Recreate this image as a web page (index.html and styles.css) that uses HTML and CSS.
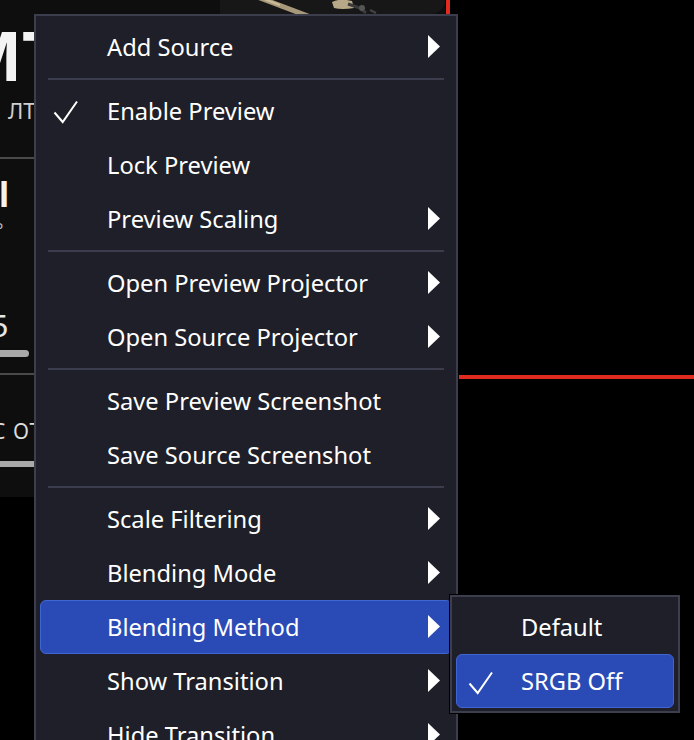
FILE: index.html
```html
<!DOCTYPE html>
<html lang="en">
<head>
<meta charset="utf-8">
<title>Context menu</title>
<link rel="stylesheet" href="styles.css">
</head>
<body>
<div class="screen">
  <div class="preview">
    <div class="panel">
      <div class="topimg">
        <svg width="225" height="14" viewBox="0 0 225 14">
          <path d="M40 -2 L88 16" stroke="#a8987a" stroke-width="5" stroke-linecap="round"/>
          <path d="M44 -1 L60 5" stroke="#cbbd9c" stroke-width="2"/>
          <path d="M112 2 Q120 -2 132 1 L134 8 Q122 10 114 8 Z" fill="#b7a887"/>
          <path d="M128 4 L140 8 L146 13" stroke="#3a3a3a" stroke-width="3" fill="none"/>
          <circle cx="142" cy="8" r="3" fill="#555"/>
          <path d="M150 10 L156 13" stroke="#444" stroke-width="2"/>
        </svg>
      </div>
      <div class="bigtxt">МТ</div>
      <div class="smalltxt">ЛТ</div>
      <div class="hline"></div>
      <div class="itxt">l</div>
      <div class="degtxt">°</div>
      <div class="numtxt">25</div>
      <div class="bar short"></div>
      <div class="hline second"></div>
      <div class="otxt">С ОТ</div>
      <div class="bar full"></div>
    </div>
    <div class="red-v"></div>
    <div class="red-h"></div>
  </div>

  <div class="menu">
    <div class="item"><span class="check"></span><span class="label">Add Source</span><span class="arrow"><svg width="12" height="23" viewBox="0 0 12 23"><path d="M0 0 L12 11.5 L0 23 Z" fill="#fff"/></svg></span></div>
    <div class="sep"></div>
    <div class="item"><span class="check"><svg width="26" height="24" viewBox="0 0 26 24"><path d="M1.5 12.5 L9.7 22 L24 1.5" stroke="#fff" stroke-width="2" fill="none"/></svg></span><span class="label">Enable Preview</span></div>
    <div class="item"><span class="check"></span><span class="label">Lock Preview</span></div>
    <div class="item"><span class="check"></span><span class="label">Preview Scaling</span><span class="arrow"><svg width="12" height="23" viewBox="0 0 12 23"><path d="M0 0 L12 11.5 L0 23 Z" fill="#fff"/></svg></span></div>
    <div class="sep"></div>
    <div class="item"><span class="check"></span><span class="label">Open Preview Projector</span><span class="arrow"><svg width="12" height="23" viewBox="0 0 12 23"><path d="M0 0 L12 11.5 L0 23 Z" fill="#fff"/></svg></span></div>
    <div class="item"><span class="check"></span><span class="label">Open Source Projector</span><span class="arrow"><svg width="12" height="23" viewBox="0 0 12 23"><path d="M0 0 L12 11.5 L0 23 Z" fill="#fff"/></svg></span></div>
    <div class="sep"></div>
    <div class="item"><span class="check"></span><span class="label">Save Preview Screenshot</span></div>
    <div class="item"><span class="check"></span><span class="label">Save Source Screenshot</span></div>
    <div class="sep"></div>
    <div class="item"><span class="check"></span><span class="label">Scale Filtering</span><span class="arrow"><svg width="12" height="23" viewBox="0 0 12 23"><path d="M0 0 L12 11.5 L0 23 Z" fill="#fff"/></svg></span></div>
    <div class="item"><span class="check"></span><span class="label">Blending Mode</span><span class="arrow"><svg width="12" height="23" viewBox="0 0 12 23"><path d="M0 0 L12 11.5 L0 23 Z" fill="#fff"/></svg></span></div>
    <div class="item active"><span class="check"></span><span class="label">Blending Method</span><span class="arrow"><svg width="12" height="23" viewBox="0 0 12 23"><path d="M0 0 L12 11.5 L0 23 Z" fill="#fff"/></svg></span></div>
    <div class="item"><span class="check"></span><span class="label">Show Transition</span><span class="arrow"><svg width="12" height="23" viewBox="0 0 12 23"><path d="M0 0 L12 11.5 L0 23 Z" fill="#fff"/></svg></span></div>
    <div class="item"><span class="check"></span><span class="label">Hide Transition</span><span class="arrow"><svg width="12" height="23" viewBox="0 0 12 23"><path d="M0 0 L12 11.5 L0 23 Z" fill="#fff"/></svg></span></div>
  </div>

  <div class="submenu">
    <div class="item sub"><span class="check"></span><span class="label">Default</span></div>
    <div class="item sub active"><span class="check"><svg width="26" height="24" viewBox="0 0 26 24"><path d="M1.5 12.5 L9.7 22 L24 1.5" stroke="#fff" stroke-width="2" fill="none"/></svg></span><span class="label">SRGB Off</span></div>
  </div>
</div>
</body>
</html>
```

FILE: styles.css
```css
html, body {
  margin: 0;
  padding: 0;
  background: #000;
  overflow: hidden;
}

.screen {
  position: relative;
  width: 694px;
  height: 740px;
  overflow: hidden;
  background: #000;
  font-family: "Noto Sans", "Open Sans", sans-serif;
}

.preview {
  position: relative;
  width: 694px;
  height: 740px;
}

.panel {
  width: 445px;
  height: 497px;
  background: #0e0e0e;
  border-bottom-right-radius: 10px;
  overflow: hidden;
  display: flex;
  flex-direction: column;
  color: #fff;
  font-family: "Noto Sans", sans-serif;
  white-space: nowrap;
}

.topimg {
  height: 14px;
  margin-left: 220px;
  width: 225px;
  background: #171717;
  border-bottom-right-radius: 14px;
  overflow: hidden;
  flex: none;
}
.topimg svg { display: block; }

.bigtxt {
  margin-top: 7px;
  margin-left: -42px;
  font-size: 68px;
  line-height: 68px;
  height: 68px;
  font-weight: 700;
  color: #f4f4f4;
  flex: none;
}

.smalltxt {
  margin-top: 10px;
  margin-left: 8px;
  font-size: 22px;
  line-height: 22px;
  height: 22px;
  color: #cfcfcf;
  flex: none;
}

.hline {
  margin-top: 36px;
  height: 2px;
  background: #4a4a4a;
  flex: none;
}
.hline.second { margin-top: 16px; }

.itxt {
  margin-top: 18px;
  margin-left: -1px;
  font-size: 34px;
  line-height: 34px;
  height: 34px;
  font-weight: 700;
  color: #f2f2f2;
  flex: none;
}

.degtxt {
  margin-top: 10px;
  margin-left: -5px;
  font-size: 20px;
  line-height: 20px;
  height: 20px;
  color: #bbb;
  flex: none;
}

.numtxt {
  margin-top: 69px;
  margin-left: -27px;
  font-size: 31px;
  line-height: 31px;
  height: 31px;
  color: #e6e6e6;
  flex: none;
}

.bar {
  flex: none;
  background: #a9a9a9;
}
.bar.short {
  margin-top: 9px;
  height: 7px;
  width: 29px;
  border-radius: 0 4px 4px 0;
}
.bar.full {
  margin-top: 19px;
  height: 6px;
  width: 60px;
}

.otxt {
  margin-top: 46px;
  margin-left: -8px;
  font-size: 21px;
  line-height: 21px;
  height: 21px;
  color: #dcdcdc;
  letter-spacing: 1px;
  flex: none;
}

.red-v {
  position: absolute;
  left: 446px;
  top: 0;
  width: 4px;
  height: 14px;
  background: #e02b1f;
}
.red-h {
  position: absolute;
  left: 459px;
  top: 375px;
  width: 235px;
  height: 4px;
  background: #e02b1f;
}

.menu {
  position: absolute;
  left: 34px;
  top: 14px;
  width: 424px;
  height: 760px;
  box-sizing: border-box;
  background: #1e1f28;
  border: 2px solid #3c3e4d;
  padding: 4px 0;
}

.item {
  display: flex;
  align-items: center;
  height: 54px;
  box-sizing: border-box;
  margin: 0 4px;
  padding: 0 11px 0 12px;
  border: 1px solid transparent;
  border-radius: 6px;
  color: #fff;
  font-size: 23.7px;
  white-space: nowrap;
}

.item.active {
  background: #2a4bb6;
  border-color: #4066d3;
}

.check {
  width: 54px;
  flex: none;
  display: flex;
  align-items: center;
  height: 24px;
}
.check svg { display: block; margin-top: 1px; }

.label {
  flex: 1;
  line-height: 52px;
  margin-top: -1px;
}

.arrow {
  flex: none;
  width: 12px;
  height: 23px;
  margin-top: -2px;
}
.arrow svg { display: block; }

.sep {
  height: 2px;
  margin: 4px 12px;
  background: #3b3d4c;
}

.submenu {
  position: absolute;
  left: 450px;
  top: 595px;
  width: 230px;
  box-sizing: border-box;
  background: #1e1f28;
  border: 2px solid #3c3e4d;
  box-shadow: 0 0 0 1px #000;
  padding: 3px 0;
}

.item.sub {
  padding-left: 11px;
}
.item.sub .check { width: 53px; }
.item.sub .check svg { margin-top: 3px; }
```
